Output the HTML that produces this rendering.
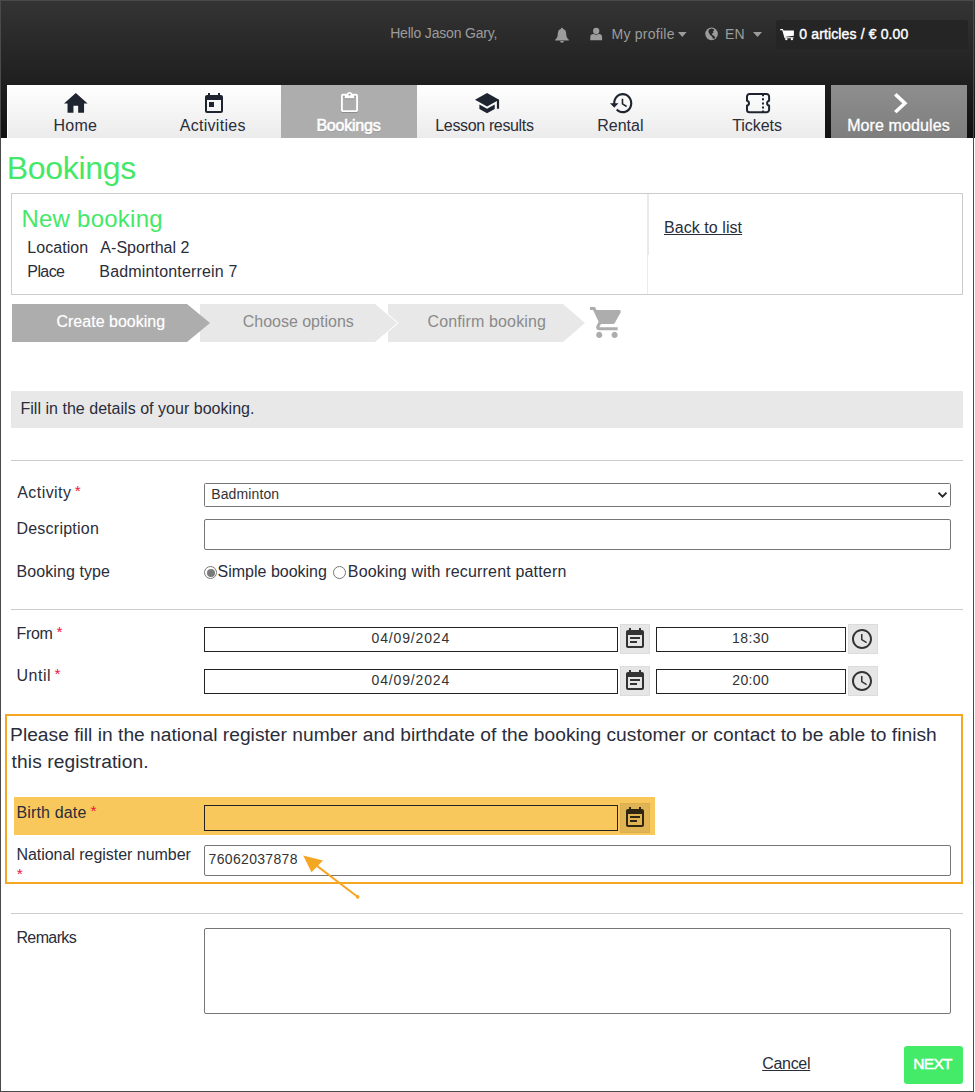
<!DOCTYPE html>
<html lang="en">
<head>
<meta charset="utf-8">
<title>Bookings - New booking</title>
<style>
html,body{margin:0;padding:0}
body{width:975px;height:1092px;position:relative;overflow:hidden;background:#fff;font-family:"Liberation Sans",sans-serif;color:#2a2d3a}
.a{position:absolute;box-sizing:border-box}
.t{position:absolute;white-space:nowrap;line-height:1;margin:0;padding:0;font-weight:400;text-decoration:none}
svg{position:absolute;display:block;overflow:visible}
.hr{position:absolute;left:11px;width:952px;height:1px;background:#ccc}
.in{position:absolute;box-sizing:border-box;border:1px solid #767676;border-radius:2px;background:#fff}
.sq{position:absolute;box-sizing:border-box;border:1px solid #222;background:#fff}
.ib{position:absolute;box-sizing:border-box;width:30px;height:30px;background:#e6e6e6;border:1px solid #dcdcdc}
</style>
</head>
<body>
<!-- header -->
<div class="a" style="left:0;top:0;width:975px;height:138px;background:linear-gradient(#343434,#111)"></div>
<div class="a" style="left:776px;top:20px;width:192px;height:29px;background:#252525;border-radius:3px"></div>
<!-- nav -->
<div class="a" style="left:7px;top:85px;width:818px;height:53px;background:linear-gradient(#fff,#ebebeb);border-left:1px solid #fff"></div>
<div class="a" style="left:281px;top:85px;width:136px;height:53px;background:#adadad"></div>
<div class="a" style="left:831px;top:85px;width:136px;height:53px;background:linear-gradient(#8e8e8e,#7e7e7e)"></div>
<!--NAVICONS-->
<!--HDRICONS-->
<!-- info box -->
<div class="a" style="left:11px;top:193px;width:952px;height:102px;border:1px solid #ccc"></div>
<div class="a" style="left:647px;top:194px;width:2px;height:61px;background:#e9e9e9"></div>
<div class="a" style="left:647px;top:255px;width:1px;height:39px;background:#ececec"></div>
<!-- steps -->
<svg style="left:12px;top:304px" width="612" height="38" viewBox="0 0 612 38">
  <polygon points="376,0 551,0 573,19 551,38 376,38" fill="#e8e8e8"/>
  <polygon points="188,0 363,0 385.300,19 363,38 188,38" fill="#e8e8e8" stroke="#fff" stroke-width="1.800" paint-order="stroke"/>
  <polygon points="0,0 175,0 198,19 175,38 0,38" fill="#adadad"/>
</svg>
<!--CART-->
<!-- grey bar -->
<div class="a" style="left:11px;top:391px;width:952px;height:37px;background:#e8e8e8"></div>
<div class="hr" style="top:460px"></div>
<div class="hr" style="top:609px"></div>
<div class="hr" style="top:913px"></div>
<!-- form controls -->
<div class="in" style="left:204px;top:483px;width:747px;height:24px;border-radius:1.500px"></div>
<svg style="left:936.500px;top:491px" width="11" height="8" viewBox="0 0 11 8"><path d="M1.500 1.600 L5.500 5.600 L9.500 1.600" fill="none" stroke="#2a2a2a" stroke-width="2"/></svg>
<div class="in" style="left:204px;top:519px;width:747px;height:31px"></div>
<!-- radios -->
<div class="a" style="left:204px;top:566px;width:13px;height:13px;border:1px solid #767676;border-radius:50%;background:#fff"></div>
<div class="a" style="left:206.500px;top:568.500px;width:8px;height:8px;border-radius:50%;background:#7a7a7a"></div>
<div class="a" style="left:333px;top:566px;width:13px;height:13px;border:1px solid #767676;border-radius:50%;background:#fff"></div>
<!-- from / until -->
<div class="sq" style="left:204px;top:627px;width:414px;height:25px"></div>
<div class="ib" style="left:620px;top:624px"></div>
<div class="sq" style="left:656px;top:627px;width:190px;height:25px"></div>
<div class="ib" style="left:848px;top:624px"></div>
<div class="sq" style="left:204px;top:669px;width:414px;height:25px"></div>
<div class="ib" style="left:620px;top:666px"></div>
<div class="sq" style="left:656px;top:669px;width:190px;height:25px"></div>
<div class="ib" style="left:848px;top:666px"></div>
<!-- highlighted section -->
<div class="a" style="left:5px;top:714px;width:958px;height:170px;border:2px solid #f5a623"></div>
<div class="a" style="left:14px;top:797px;width:641px;height:38px;background:#f9c85c"></div>
<div class="sq" style="left:204px;top:805px;width:414px;height:26px;background:#f9c85c"></div>
<div class="ib" style="left:620px;top:803px;background:#e0b353;border-color:#d9ad50"></div>
<div class="in" style="left:204px;top:845px;width:747px;height:31px"></div>
<svg style="left:295px;top:848px" width="70" height="56" viewBox="295 848 70 56">
  <line x1="357.5" y1="896.8" x2="314" y2="863.6" stroke="#f5a623" stroke-width="2"/>
  <circle cx="357.7" cy="896.9" r="1.8" fill="#f5a623"/>
  <polygon points="303.2,855.4 323,860.6 311.5,872.3" fill="#f5a623"/>
</svg>
<!-- remarks -->
<div class="in" style="left:204px;top:928px;width:747px;height:86px"></div>
<!-- next button -->
<div class="a" style="left:904px;top:1046px;width:59px;height:38px;background:#44eb69;border-radius:3px"></div>
<!-- header icons -->
<svg style="left:554px;top:27px" width="16" height="16" viewBox="554 27 16 16"><path fill="#9c9c9c" d="M562 27.800c-.600 0-1 .400-1 1v.300c-2 .500-3.200 2.300-3.200 4.400 0 3.200-1 5-2.700 6.300v.700h13.800v-.700c-1.700-1.300-2.700-3.100-2.700-6.300 0-2.100-1.200-3.900-3.200-4.400v-.300c0-.600-.400-1-1-1zM560.100 41.100a1.900 1.700 0 0 0 3.800 0z"/></svg>
<svg style="left:589px;top:27px" width="15" height="15" viewBox="589 27 15 15"><circle cx="596.200" cy="31" r="3.150" fill="#9c9c9c"/><path fill="#9c9c9c" d="M590.300 40.200v-3c0-1.900 1.200-3.100 3-3.100h.500c.700.550 1.500.800 2.400.800s1.700-.250 2.400-.800h.500c1.800 0 3 1.200 3 3.100v3z"/></svg>
<svg style="left:678.4px;top:31.7px" width="8.600" height="5" viewBox="0 0 8.600 5"><polygon points="0,0 8.600,0 4.300,5" fill="#9c9c9c"/></svg>
<svg style="left:704px;top:27px" width="16" height="15" viewBox="704 27 16 15"><circle cx="711.550" cy="33.850" r="6.300" fill="#9c9c9c"/><path fill="#2a2a2a" d="M709.300 29.300l2.200-.700 2.300.600.300 1.500-1.300.500.800 1.200-1.600 1.300.300 1.400 1.700.700 1.300 1.600-.900 1.300-1.600-.300-.700-1.900-1.500-1.100-1.600-2.100-.600-2.300z"/></svg>
<svg style="left:753px;top:31.700px" width="9" height="5" viewBox="0 0 9 5"><polygon points="0,0 9,0 4.500,5" fill="#9c9c9c"/></svg>
<svg style="left:780px;top:28px" width="15" height="13" viewBox="780 28 15 13"><path fill="#fff" d="M780.200 29h2.600l.700 1.500h10.400v5.200l-8.300 1v.600h8v1h-9l-.400-1.300-1.900-6.800h-2.100z"/><circle cx="786.300" cy="39.200" r="1.150" fill="#fff"/><circle cx="791.900" cy="39.200" r="1.150" fill="#fff"/></svg>
<!-- nav icons -->
<svg style="left:64.400px;top:93px" width="23.600" height="19.800" viewBox="2 3 20 17" preserveAspectRatio="none"><path fill="#1f2530" d="M10 20v-6h4v6h5v-8h3L12 3 2 12h3v8z"/></svg>
<svg style="left:202px;top:91.800px" width="24" height="24" viewBox="0 0 24 24"><path fill="#1f2530" d="M19 3h-1V1h-2v2H8V1H6v2H5c-1.110 0-1.990.900-1.990 2L3 19c0 1.100.890 2 2 2h14c1.100 0 2-.900 2-2V5c0-1.100-.900-2-2-2zm0 16H5V8h14v11zM7 10h5v5H7z"/></svg>
<svg style="left:341px;top:93px" width="17" height="20" viewBox="3 0 18 22" preserveAspectRatio="none"><path fill="rgba(0,0,0,.18)" d="M19 2h-4.180C14.400.840 13.300 0 12 0c-1.300 0-2.400.840-2.820 2H5c-1.100 0-2 .900-2 2v16c0 1.100.900 2 2 2h14c1.100 0 2-.900 2-2V4c0-1.100-.900-2-2-2zm-7 0c.550 0 1 .450 1 1s-.450 1-1 1-1-.450-1-1 .450-1 1-1zm7 18H5V4h2v3h10V4h2v16z"/></svg>
<svg style="left:341px;top:92px" width="17" height="20" viewBox="3 0 18 22" preserveAspectRatio="none"><path fill="#fff" d="M19 2h-4.180C14.400.840 13.300 0 12 0c-1.300 0-2.400.840-2.820 2H5c-1.100 0-2 .900-2 2v16c0 1.100.900 2 2 2h14c1.100 0 2-.900 2-2V4c0-1.100-.900-2-2-2zm-7 0c.550 0 1 .450 1 1s-.450 1-1 1-1-.450-1-1 .450-1 1-1zm7 18H5V4h2v3h10V4h2v16z"/></svg>
<svg style="left:475.100px;top:92.800px" width="24.100" height="20.300" viewBox="1 3 22 18" preserveAspectRatio="none"><path fill="#1f2530" d="M5 13.180v4L12 21l7-3.820v-4L12 17l-7-3.820zM12 3L1 9l11 6 9-4.910V17h2V9L12 3z"/></svg>
<svg style="left:610.100px;top:92.800px" width="22.300" height="20.300" viewBox="1 3 21 18" preserveAspectRatio="none"><path fill="#1f2530" d="M13 3c-4.970 0-9 4.030-9 9H1l3.890 3.890.070.140L9 12H6c0-3.870 3.130-7 7-7s7 3.130 7 7-3.130 7-7 7c-1.930 0-3.680-.790-4.940-2.060l-1.420 1.420C8.270 19.990 10.510 21 13 21c4.970 0 9-4.030 9-9s-4.030-9-9-9zm-1 5v5l4.280 2.540.720-1.210-3.500-2.080V8H12z"/></svg>
<svg style="left:746px;top:92.800px" width="24.100" height="20.300" viewBox="0 0 24.100 20.300"><path fill="none" stroke="#1f2530" stroke-width="2" stroke-linejoin="round" d="M3.500 1h17.100a2.500 2.500 0 0 1 2.500 2.500v4.200a2.500 2.500 0 0 0 0 4.900v4.200a2.500 2.500 0 0 1-2.500 2.500H3.500a2.500 2.500 0 0 1-2.500-2.500v-4.200a2.500 2.500 0 0 0 0-4.900V3.500A2.500 2.500 0 0 1 3.500 1z"/><path stroke="#1f2530" stroke-width="2" stroke-dasharray="2 2.100" d="M17 1.200v18"/></svg>
<svg style="left:893.700px;top:92.800px" width="13.500" height="20.300" viewBox="8.590 6 7.410 12" preserveAspectRatio="none"><path fill="#fff" d="M10 6L8.590 7.410 13.170 12l-4.580 4.590L10 18l6-6z"/></svg>
<!-- steps cart -->
<svg style="left:590px;top:307.300px" width="31.700" height="31" viewBox="1 2 20.600 20" preserveAspectRatio="none"><path fill="#adadad" d="M7 18c-1.100 0-1.990.900-1.990 2S5.900 22 7 22s2-.900 2-2-.900-2-2-2zM1 2v2h2l3.600 7.590-1.350 2.450c-.160.280-.250.610-.250.960 0 1.100.900 2 2 2h12v-2H7.420c-.140 0-.250-.110-.250-.250l.030-.120.900-1.630h7.450c.750 0 1.410-.410 1.750-1.030l3.580-6.490c.080-.140.120-.310.120-.480 0-.550-.450-1-1-1H5.210l-.940-2H1zm16 16c-1.100 0-1.990.900-1.990 2s.890 2 1.990 2 2-.900 2-2-.900-2-2-2z"/></svg>
<!-- calendar + clock icons -->
<svg style="left:623px;top:627px" width="24" height="24" viewBox="0 0 24 24"><path fill="#333" d="M17 10H7v2h10v-2zm2-7h-1V1h-2v2H8V1H6v2H5c-1.110 0-1.990.900-1.990 2L3 19c0 1.100.890 2 2 2h14c1.100 0 2-.900 2-2V5c0-1.100-.900-2-2-2zm0 16H5V8h14v11zm-5-5H7v2h7v-2z"/></svg>
<svg style="left:623px;top:669px" width="24" height="24" viewBox="0 0 24 24"><path fill="#333" d="M17 10H7v2h10v-2zm2-7h-1V1h-2v2H8V1H6v2H5c-1.110 0-1.990.900-1.990 2L3 19c0 1.100.890 2 2 2h14c1.100 0 2-.900 2-2V5c0-1.100-.900-2-2-2zm0 16H5V8h14v11zm-5-5H7v2h7v-2z"/></svg>
<svg style="left:623px;top:806px" width="24" height="24" viewBox="0 0 24 24"><path fill="#2e2610" d="M17 10H7v2h10v-2zm2-7h-1V1h-2v2H8V1H6v2H5c-1.110 0-1.990.900-1.990 2L3 19c0 1.100.890 2 2 2h14c1.100 0 2-.900 2-2V5c0-1.100-.900-2-2-2zm0 16H5V8h14v11zm-5-5H7v2h7v-2z"/></svg>
<svg style="left:850px;top:627px" width="24" height="24" viewBox="0 0 24 24"><path fill="#333" d="M11.990 2C6.470 2 2 6.480 2 12s4.470 10 9.990 10C17.520 22 22 17.520 22 12S17.520 2 11.990 2zM12 20c-4.420 0-8-3.580-8-8s3.580-8 8-8 8 3.580 8 8-3.580 8-8 8zm.500-13H11v6l5.250 3.150.750-1.230-4.500-2.670z"/></svg>
<svg style="left:850px;top:669px" width="24" height="24" viewBox="0 0 24 24"><path fill="#333" d="M11.990 2C6.470 2 2 6.480 2 12s4.470 10 9.990 10C17.520 22 22 17.520 22 12S17.520 2 11.990 2zM12 20c-4.420 0-8-3.580-8-8s3.580-8 8-8 8 3.580 8 8-3.580 8-8 8zm.500-13H11v6l5.250 3.150.750-1.230-4.500-2.670z"/></svg>

<span class="t" style="left:390.17px;top:25.7px;font-size:14px;color:#9c9c9c;letter-spacing:-0.180px;">Hello Jason Gary,</span>
<a href="#" class="t" style="left:611.56px;top:27.0px;font-size:14px;color:#9c9c9c;letter-spacing:0.246px;">My profile</a>
<a href="#" class="t" style="left:724.88px;top:27.0px;font-size:14px;color:#9c9c9c;letter-spacing:0.232px;">EN</a>
<a href="#" class="t" style="left:799.34px;top:26.7px;font-size:14px;color:#fff;letter-spacing:0.129px;-webkit-text-stroke:.4px #fff;">0 articles / € 0.00</a>
<a href="#" class="t" style="left:53.62px;top:118.0px;font-size:16px;color:#2a2d3a;letter-spacing:0.178px;">Home</a>
<a href="#" class="t" style="left:179.82px;top:118.0px;font-size:16px;color:#2a2d3a;letter-spacing:0.271px;">Activities</a>
<a href="#" class="t" style="left:316.40px;top:118.0px;font-size:16px;color:#fff;letter-spacing:-0.218px;text-shadow:0 1px 0 rgba(0,0,0,.25);-webkit-text-stroke:.6px #fff;">Bookings</a>
<a href="#" class="t" style="left:435.33px;top:118.0px;font-size:16px;color:#2a2d3a;letter-spacing:-0.354px;">Lesson results</a>
<a href="#" class="t" style="left:597.34px;top:118.0px;font-size:16px;color:#2a2d3a;letter-spacing:-0.025px;">Rental</a>
<a href="#" class="t" style="left:732.18px;top:118.0px;font-size:16px;color:#2a2d3a;letter-spacing:-0.037px;">Tickets</a>
<a href="#" class="t" style="left:847.17px;top:118.0px;font-size:16px;color:#fff;letter-spacing:0.101px;text-shadow:0 1px 0 rgba(0,0,0,.25);-webkit-text-stroke:.35px #fff;">More modules</a>
<h1 class="t" style="left:6.79px;top:151.7px;font-size:32px;color:#44e868;letter-spacing:-0.305px;">Bookings</h1>
<h2 class="t" style="left:21.39px;top:206.7px;font-size:24px;color:#44e868;letter-spacing:0.248px;">New booking</h2>
<label class="t" style="left:27.34px;top:239.8px;font-size:16px;color:#2a2d3a;letter-spacing:0.034px;">Location</label>
<span class="t" style="left:100.36px;top:239.8px;font-size:16px;color:#2a2d3a;letter-spacing:0.011px;">A-Sporthal 2</span>
<label class="t" style="left:27.34px;top:263.5px;font-size:16px;color:#2a2d3a;letter-spacing:-0.598px;">Place</label>
<span class="t" style="left:99.33px;top:263.5px;font-size:16px;color:#2a2d3a;letter-spacing:0.170px;">Badmintonterrein 7</span>
<a href="#" class="t" style="left:663.96px;top:219.5px;font-size:16px;color:#2a2d3a;letter-spacing:0.065px;text-decoration:underline;text-underline-offset:1px;">Back to list</a>
<span class="t" style="left:56.45px;top:313.7px;font-size:16px;color:#fff;letter-spacing:0.014px;text-shadow:0 0 1px rgba(255,255,255,.5);">Create booking</span>
<span class="t" style="left:242.73px;top:313.7px;font-size:16px;color:#8a8a8a;letter-spacing:-0.011px;">Choose options</span>
<span class="t" style="left:427.46px;top:313.7px;font-size:16px;color:#8a8a8a;letter-spacing:0.139px;">Confirm booking</span>
<p class="t" style="left:20.43px;top:400.8px;font-size:16px;color:#2a2d3a;letter-spacing:0.029px;">Fill in the details of your booking.</p>
<label class="t" style="left:17.23px;top:484.8px;font-size:16px;color:#2a2d3a;letter-spacing:0.443px;">Activity</label>
<span class="t" style="left:74.85px;top:482.6px;font-size:15.5px;color:#f0143c;">*</span>
<label class="t" style="left:16.43px;top:520.9px;font-size:16px;color:#2a2d3a;letter-spacing:0.244px;">Description</label>
<label class="t" style="left:16.43px;top:563.6px;font-size:16px;color:#2a2d3a;letter-spacing:0.091px;">Booking type</label>
<label class="t" style="left:217.60px;top:563.6px;font-size:16px;color:#2a2d3a;letter-spacing:-0.008px;">Simple booking</label>
<label class="t" style="left:347.82px;top:563.6px;font-size:16px;color:#2a2d3a;letter-spacing:0.174px;">Booking with recurrent pattern</label>
<label class="t" style="left:16.62px;top:625.8px;font-size:16px;color:#2a2d3a;letter-spacing:-0.370px;">From</label>
<span class="t" style="left:56.52px;top:624.4px;font-size:15.5px;color:#f0143c;">*</span>
<label class="t" style="left:16.48px;top:667.8px;font-size:16px;color:#2a2d3a;letter-spacing:0.532px;">Until</label>
<span class="t" style="left:54.52px;top:666.0px;font-size:15.5px;color:#f0143c;">*</span>
<p class="t" style="left:10.08px;top:725.0px;font-size:19.2px;color:#2a2d3a;letter-spacing:0.017px;">Please fill in the national register number and birthdate of the booking customer or contact to be able to finish</p>
<p class="t" style="left:11.62px;top:752.3px;font-size:19.2px;color:#2a2d3a;letter-spacing:0.086px;">this registration.</p>
<label class="t" style="left:16.43px;top:804.6px;font-size:16px;color:#2a2d3a;letter-spacing:0.153px;">Birth date</label>
<span class="t" style="left:90.41px;top:803.2px;font-size:15.5px;color:#f0143c;">*</span>
<label class="t" style="left:16.43px;top:846.6px;font-size:16px;color:#2a2d3a;letter-spacing:-0.030px;">National register number</label>
<span class="t" style="left:16.85px;top:866.0px;font-size:15.5px;color:#f0143c;">*</span>
<label class="t" style="left:16.43px;top:929.7px;font-size:16px;color:#2a2d3a;letter-spacing:-0.611px;">Remarks</label>
<a href="#" class="t" style="left:762.15px;top:1055.9px;font-size:16px;color:#2a2d3a;letter-spacing:-0.281px;text-decoration:underline;text-underline-offset:1px;">Cancel</a>
<span class="t" style="left:913.25px;top:1056.0px;font-size:15.5px;color:#fff;letter-spacing:-0.688px;-webkit-text-stroke:.5px #fff;">NEXT</span>
<span class="t" style="left:211.17px;top:486.7px;font-size:14px;color:#333;letter-spacing:0.133px;">Badminton</span>
<span class="t" style="left:371.51px;top:630.5px;font-size:14px;color:#333;letter-spacing:0.848px;">04/09/2024</span>
<span class="t" style="left:371.51px;top:672.5px;font-size:14px;color:#333;letter-spacing:0.848px;">04/09/2024</span>
<span class="t" style="left:732.00px;top:630.5px;font-size:14px;color:#333;letter-spacing:0.429px;">18:30</span>
<span class="t" style="left:732.37px;top:672.5px;font-size:14px;color:#333;letter-spacing:0.338px;">20:00</span>
<span class="t" style="left:208.62px;top:851.8px;font-size:14px;color:#333;letter-spacing:0.320px;">76062037878</span>
<!-- frame -->
<div class="a" style="left:0;top:0;width:974px;height:1092px;border:1px solid #4a4a4a;pointer-events:none"></div>
</body>
</html>
